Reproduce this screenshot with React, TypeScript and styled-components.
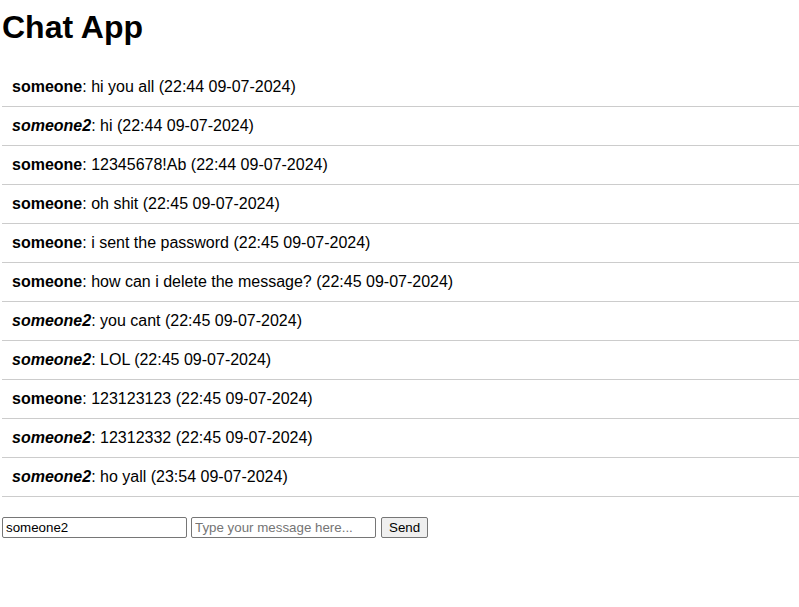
import React, { useState } from 'react';
import styled, { createGlobalStyle } from 'styled-components';

const GlobalStyle = createGlobalStyle`
  body {
    margin: 0;
    padding: 0 0 0 2px;
    font-family: "Liberation Sans", Arial, sans-serif;
    background: #fff;
    color: #000;
  }
`;

const Title = styled.h1`
  font-size: 32px;
  font-weight: bold;
  margin: 9px 0 0;
  line-height: 37px;
`;

const MessageList = styled.ul`
  list-style: none;
  margin: 22px 0 0;
  padding: 0;
`;

const MessageRow = styled.li`
  padding: 10px;
  font-size: 16px;
  line-height: 18px;
  border-bottom: 1px solid #ccc;
`;

const Author = styled.strong<{ $self: boolean }>`
  font-weight: bold;
  font-style: ${(p) => (p.$self ? 'italic' : 'normal')};
`;

const Form = styled.form`
  display: flex;
  align-items: center;
  gap: 4px;
  margin-top: 20px;
`;

const Field = styled.input`
  box-sizing: border-box;
  width: 185px;
  height: 21px;
  padding: 1px 3px;
  border: 1px solid #767676;
  border-radius: 2px;
  font-family: "Liberation Sans", Arial, sans-serif;
  font-size: 13.33px;
  color: #000;
  &::placeholder {
    color: #757575;
  }
`;

const SendButton = styled.button`
  box-sizing: border-box;
  height: 21px;
  margin-left: 1px;
  padding: 1px 7px;
  border: 1px solid #767676;
  border-radius: 2px;
  background: #efefef;
  font-family: "Liberation Sans", Arial, sans-serif;
  font-size: 13.33px;
  color: #000;
`;

interface Message {
  user: string;
  text: string;
  time: string;
}

const messages: Message[] = [
  { user: 'someone', text: 'hi you all', time: '22:44 09-07-2024' },
  { user: 'someone2', text: 'hi', time: '22:44 09-07-2024' },
  { user: 'someone', text: '12345678!Ab', time: '22:44 09-07-2024' },
  { user: 'someone', text: 'oh shit', time: '22:45 09-07-2024' },
  { user: 'someone', text: 'i sent the password', time: '22:45 09-07-2024' },
  { user: 'someone', text: 'how can i delete the message?', time: '22:45 09-07-2024' },
  { user: 'someone2', text: 'you cant', time: '22:45 09-07-2024' },
  { user: 'someone2', text: 'LOL', time: '22:45 09-07-2024' },
  { user: 'someone', text: '123123123', time: '22:45 09-07-2024' },
  { user: 'someone2', text: '12312332', time: '22:45 09-07-2024' },
  { user: 'someone2', text: 'ho yall', time: '23:54 09-07-2024' }
];

const App = () => {
  const [name, setName] = useState('someone2');
  const [text, setText] = useState('');

  return (
    <>
      <GlobalStyle />
      <Title>Chat App</Title>
      <MessageList>
        {messages.map((m, index) => (
          <MessageRow key={index}>
            <Author $self={m.user === name}>{m.user}</Author>: {m.text} ({m.time})
          </MessageRow>
        ))}
      </MessageList>
      <Form onSubmit={(e) => e.preventDefault()}>
        <Field value={name} onChange={(e) => setName(e.target.value)} />
        <Field
          placeholder="Type your message here..."
          value={text}
          onChange={(e) => setText(e.target.value)}
        />
        <SendButton type="submit">Send</SendButton>
      </Form>
    </>
  );
};

export default App;
